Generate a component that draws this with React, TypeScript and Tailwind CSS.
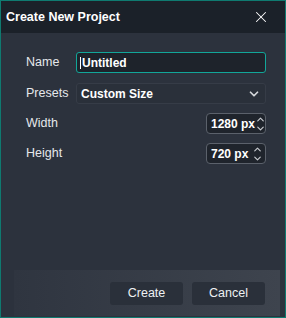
import { X, ChevronDown, ChevronUp } from 'lucide-react';

function Spinner({ value }: { value: string }) {
  return (
    <div className="flex h-[21px] w-[60px] items-center justify-between rounded-[4px] border border-[#5b616b] bg-[#1f242c] pl-[4px] pr-[2px]">
      <span className="whitespace-nowrap text-[12px] font-bold text-white">{value}</span>
      <div className="flex flex-col items-center text-[#c9ccd1]">
        <ChevronUp size={11} strokeWidth={2.5} className="-mb-[2px]" />
        <ChevronDown size={11} strokeWidth={2.5} />
      </div>
    </div>
  );
}

export default function App() {
  return (
    <div
      className="flex h-[318px] w-[286px] flex-col border border-[#0f7a70] bg-[#2c323d] text-[#e6e8eb]"
      style={{ fontFamily: '"Liberation Sans", Arial, sans-serif' }}
    >
      {/* Title bar */}
      <div className="flex h-[32px] items-center justify-between bg-[#1b2129] pl-[5px] pr-[15px]">
        <span className="text-[12.5px] font-bold text-white">Create New Project</span>
        <X size={18} strokeWidth={1.4} className="text-white" />
      </div>

      {/* Form */}
      <div className="flex flex-1 flex-col pl-[25px] pr-[19px] pt-[19px]">
        <div className="flex items-center">
          <span className="w-[50px] text-[12.5px]">Name</span>
          <div className="flex h-[21px] flex-1 items-center rounded-[3px] border border-[#12a699] bg-[#1e232b] px-[3px]">
            <span className="mr-[1px] h-[12px] w-px bg-white" />
            <span className="text-[12px] font-bold text-white">Untitled</span>
          </div>
        </div>

        <div className="mt-[10px] flex items-center">
          <span className="w-[50px] text-[12.5px]">Presets</span>
          <div className="flex h-[21px] flex-1 items-center justify-between rounded-[3px] border border-[#363c47] bg-[#2a303a] pl-[4px] pr-[4px]">
            <span className="text-[12px] font-bold text-white">Custom Size</span>
            <ChevronDown size={14} strokeWidth={3} className="text-[#d4d7db]" />
          </div>
        </div>

        <div className="mt-[9px] flex items-center justify-between">
          <span className="text-[12.5px]">Width</span>
          <Spinner value="1280 px" />
        </div>

        <div className="mt-[9px] flex items-center justify-between">
          <span className="text-[12.5px]">Height</span>
          <Spinner value="720 px" />
        </div>
      </div>

      {/* Footer */}
      <div className="ml-[13px] mr-[5px] mb-[1px] flex h-[46px] items-center justify-end gap-[9px] bg-gradient-to-r from-[#2f3540] to-[#3e444e] pr-[15px]">
        <button className="h-[23px] w-[73px] rounded-[3px] bg-[#2a303a] text-[12.5px] text-[#eef0f2]">Create</button>
        <button className="h-[23px] w-[73px] rounded-[3px] bg-[#2a303a] text-[12.5px] text-[#eef0f2]">Cancel</button>
      </div>
    </div>
  );
}
